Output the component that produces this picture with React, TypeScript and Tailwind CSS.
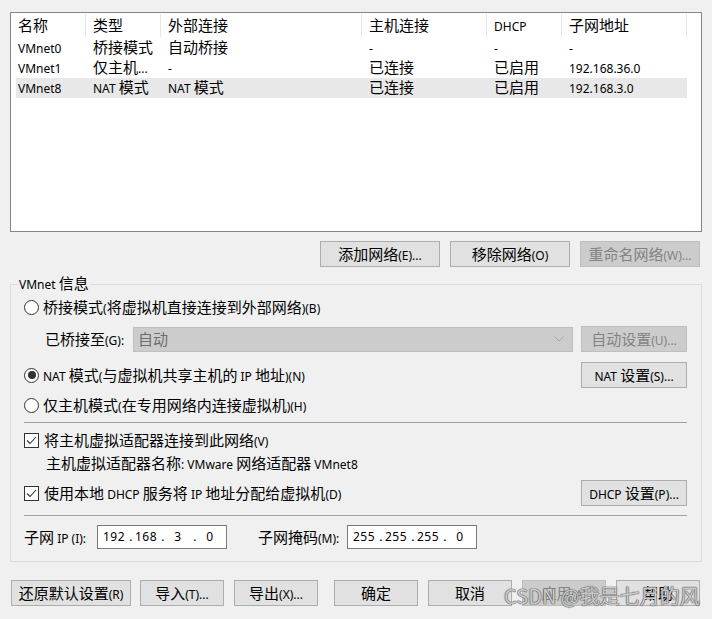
import { Fragment } from 'react'
import clsx from 'clsx'

// CJK runs are drawn larger than latin runs, like YaHei UI next to Segoe UI
const CJK = /([\u2E80-\u9FFF\uFF00-\uFFEF]+)/

function T({ s }: { s: string }) {
  return (
    <span className="whitespace-pre">
      {s.split(CJK).map((p, i) =>
        p === '' ? null : i % 2 === 1 ? (
          <span key={i} className="text-[15px]">
            {p}
          </span>
        ) : (
          <span key={i} className="text-[12px]">
            {p}
          </span>
        ),
      )}
    </span>
  )
}

function Btn({
  label,
  disabled,
  className,
}: {
  label: string
  disabled?: boolean
  className?: string
}) {
  return (
    <div
      className={clsx(
        'flex h-[26px] shrink-0 items-center justify-center border leading-none',
        disabled
          ? 'border-[#bfbfbf] bg-[#cccccc] text-[#838383]'
          : 'border-[#adadad] bg-[#e1e1e1] text-black',
        className,
      )}
    >
      <T s={label} />
    </div>
  )
}

function Radio({ checked }: { checked?: boolean }) {
  return (
    <span className="flex h-[15px] w-[15px] shrink-0 items-center justify-center rounded-full border border-[#333333] bg-white">
      {checked && <span className="h-[8px] w-[8px] rounded-full bg-[#333333]" />}
    </span>
  )
}

function Check() {
  return (
    <span className="flex h-[15px] w-[15px] shrink-0 items-center justify-center border border-[#333333] bg-white">
      <svg width="13" height="13" viewBox="0 0 13 13">
        <path d="M2 6.5 L5 9.5 L11 3" fill="none" stroke="#333333" strokeWidth="1.1" />
      </svg>
    </span>
  )
}

function IpBox({ parts }: { parts: string[] }) {
  return (
    <div className="flex h-[24px] w-[130px] shrink-0 items-center border border-[#7a7a7a] bg-white pl-[3px] text-[12px] tracking-[0.5px]">
      {parts.map((p, i) => (
        <Fragment key={i}>
          <span className="w-[26px] text-center">{p}</span>
          {i < 3 && <span className="w-[6px] text-right">.</span>}
        </Fragment>
      ))}
    </div>
  )
}

const cols = ['w-[75px]', 'w-[75px]', 'w-[201px]', 'w-[125px]', 'w-[75px]', 'w-[125px]']
const rowCols = ['w-[70px]', 'w-[75px]', 'w-[201px]', 'w-[125px]', 'w-[75px]', 'w-[125px]']

const header = ['名称', '类型', '外部连接', '主机连接', 'DHCP', '子网地址']
const rows = [
  ['VMnet0', '桥接模式', '自动桥接', '-', '-', '-'],
  ['VMnet1', '仅主机...', '-', '已连接', '已启用', '192.168.36.0'],
  ['VMnet8', 'NAT 模式', 'NAT 模式', '已连接', '已启用', '192.168.3.0'],
]

export default function App() {
  return (
    <div className="relative h-[619px] w-[712px] overflow-hidden bg-[#f0f0f0] pl-[10px] pt-[12px] font-['Noto_Sans','Noto_Sans_CJK_SC',sans-serif] text-black">
      <div className="w-[692px]">
        {/* network list */}
        <div className="h-[220px] border border-[#828790] bg-white">
          <div className="flex h-[25px]">
            {header.map((h, i) => (
              <div
                key={h}
                className={clsx('mt-[1px] flex h-[23px] items-center border-r border-[#e5e5e5] pb-[2px] pl-[7px]', cols[i])}
              >
                <T s={h} />
              </div>
            ))}
          </div>
          {rows.map((r, ri) => (
            <div
              key={r[0]}
              className={clsx('ml-[5px] flex h-[20px] w-[671px] items-center pb-[2px]', ri === 2 && 'bg-[#e8e8e8]')}
            >
              {r.map((c, i) => (
                <div
                  key={i}
                  className={clsx('flex items-center', rowCols[i], i === 0 ? 'pl-[2px]' : 'pl-[7px]')}
                >
                  <T s={c} />
                </div>
              ))}
            </div>
          ))}
        </div>

        <div className="mt-[9px] flex justify-end gap-[10px] pr-[2px]">
          <Btn label="添加网络(E)..." className="w-[120px]" />
          <Btn label="移除网络(O)" className="w-[120px]" />
          <Btn label="重命名网络(W)..." disabled className="w-[120px]" />
        </div>

        {/* VMnet info group */}
        <div className="relative mt-[17px] h-[278px] border border-[#dcdcdc] pl-[13px] pr-[14px] pt-[12px]">
          <span className="absolute -top-[12px] left-[7px] bg-[#f0f0f0] px-[1px] leading-[20px]">
            <T s="VMnet 信息" />
          </span>

          <div className="flex h-[20px] items-center gap-[4px]">
            <Radio />
            <T s="桥接模式(将虚拟机直接连接到外部网络)(B)" />
          </div>

          <div className="mt-[9px] flex h-[26px] items-center">
            <div className="ml-[21px] w-[88px]">
              <T s="已桥接至(G):" />
            </div>
            <div className="flex h-[25px] w-[440px] items-center justify-between border border-[#bfbfbf] bg-[#cccccc] pl-[4px] pr-[8px] text-[#6d6d6d]">
              <T s="自动" />
              <svg width="10" height="6" viewBox="0 0 10 6">
                <path d="M0.5 0.5 L5 5 L9.5 0.5" fill="none" stroke="#a6a6a6" strokeWidth="1" />
              </svg>
            </div>
            <Btn label="自动设置(U)..." disabled className="ml-[8px] w-[106px]" />
          </div>

          <div className="mt-[10px] flex h-[26px] items-center">
            <div className="flex items-center gap-[4px]">
              <Radio checked />
              <T s="NAT 模式(与虚拟机共享主机的 IP 地址)(N)" />
            </div>
            <Btn label="NAT 设置(S)..." className="ml-auto w-[106px]" />
          </div>

          <div className="mt-[7px] flex h-[20px] items-center gap-[4px]">
            <Radio />
            <T s="仅主机模式(在专用网络内连接虚拟机)(H)" />
          </div>

          <div className="mt-[7px] h-px bg-[#a0a0a0]" />

          <div className="mt-[7px] flex h-[20px] items-center gap-[5px]">
            <Check />
            <T s="将主机虚拟适配器连接到此网络(V)" />
          </div>

          <div className="mt-[3px] flex h-[20px] items-center pl-[22px]">
            <T s="主机虚拟适配器名称: VMware 网络适配器 VMnet8" />
          </div>

          <div className="mt-[7px] flex h-[26px] items-center">
            <div className="flex items-center gap-[5px]">
              <Check />
              <T s="使用本地 DHCP 服务将 IP 地址分配给虚拟机(D)" />
            </div>
            <Btn label="DHCP 设置(P)..." className="ml-auto w-[106px]" />
          </div>

          <div className="mt-[9px] h-px bg-[#a0a0a0]" />

          <div className="mt-[9px] flex h-[24px] items-center">
            <div className="w-[73px]">
              <T s="子网 IP (I):" />
            </div>
            <IpBox parts={['192', '168', '3', '0']} />
            <div className="ml-[31px] w-[89px]">
              <T s="子网掩码(M):" />
            </div>
            <IpBox parts={['255', '255', '255', '0']} />
          </div>
        </div>

        <div className="mt-[18px] flex">
          <Btn label="还原默认设置(R)" className="ml-[1px] w-[120px]" />
          <Btn label="导入(T)..." className="ml-[9px] w-[84px]" />
          <Btn label="导出(X)..." className="ml-[10px] w-[84px]" />
          <Btn label="确定" className="ml-[16px] w-[84px]" />
          <Btn label="取消" className="ml-[10px] w-[84px]" />
          <Btn label="应用(A)" disabled className="ml-[10px] w-[84px]" />
          <Btn label="帮助" className="ml-[10px] w-[84px]" />
        </div>
      </div>

      {/* watermark */}
      <div className="absolute left-[504px] top-[584px] whitespace-nowrap font-['Noto_Sans_CJK_SC',sans-serif] text-[20px] leading-[24px] text-white/70 [text-shadow:0_0_1px_#555,0_0_1px_#555,0_0_1px_#555]">
        CSDN @我是七月的风
      </div>
    </div>
  )
}
